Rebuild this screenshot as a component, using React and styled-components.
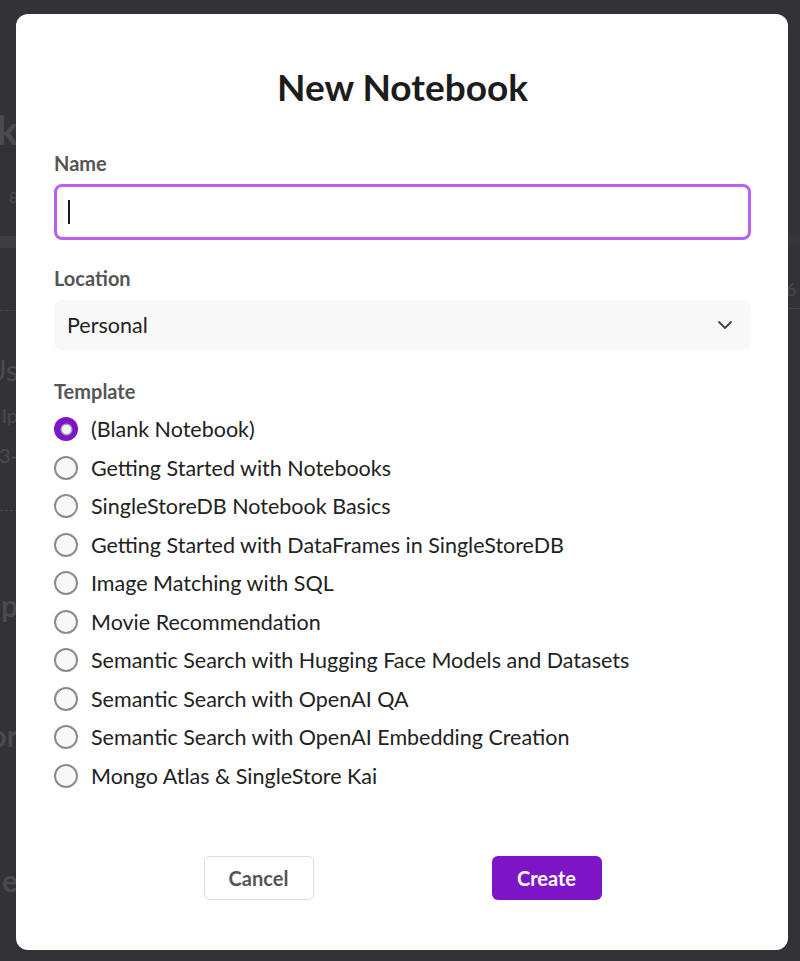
import styled, { createGlobalStyle } from "styled-components";
import { ChevronDown } from "lucide-react";

const GlobalStyle = createGlobalStyle`
  html, body {
    margin: 0;
    padding: 0;
    background: #323237;
    font-family: Lato, "Open Sans", sans-serif;
  }
  * { box-sizing: border-box; }
`;

const Page = styled.div`
  height: 961px;
  overflow: hidden;
  display: flex;
  justify-content: space-between;
`;

const GhostColumn = styled.div`
  width: ${(p) => p.$width}px;
  display: flex;
  flex-direction: column;
  align-items: ${(p) => (p.$side === "left" ? "flex-end" : "flex-start")};
  padding-top: ${(p) => p.$top}px;
`;

const Ghost = styled.div`
  white-space: nowrap;
  color: #4a4a50;
  font-size: ${(p) => p.$size}px;
  font-weight: ${(p) => (p.$bold ? 700 : 400)};
  line-height: ${(p) => p.$size + 4}px;
  margin-top: ${(p) => p.$gap}px;
`;

const GhostRule = styled.div`
  align-self: stretch;
  height: ${(p) => p.$h}px;
  margin-top: ${(p) => p.$gap}px;
  background: ${(p) => p.$bg || "transparent"};
  border-bottom: ${(p) => p.$line || "none"};
`;

const Overlay = styled.div`
  position: fixed;
  inset: 0;
  display: flex;
  justify-content: center;
  align-items: flex-start;
  padding: 14px 0 0 4px;
`;

const Modal = styled.div`
  width: 772px;
  height: 936px;
  background: #ffffff;
  border-radius: 12px;
  padding: 51px 37px 0 38px;
  display: flex;
  flex-direction: column;
`;

const Title = styled.h1`
  margin: 0;
  text-align: center;
  font-size: 37px;
  line-height: 44px;
  font-weight: 700;
  color: #1c1c1c;
`;

const Field = styled.div`
  display: flex;
  flex-direction: column;
  gap: ${(p) => p.$gap}px;
  margin-top: ${(p) => p.$top}px;
`;

const Label = styled.div`
  font-size: 20px;
  line-height: 24px;
  font-weight: 700;
  color: #555555;
`;

const TextBox = styled.div`
  height: 56px;
  border: 3px solid #bb5ff3;
  border-radius: 8px;
  display: flex;
  align-items: center;
  padding-left: 11px;
`;

const Caret = styled.span`
  width: 2px;
  height: 24px;
  background: #1a1a1a;
`;

const Select = styled.div`
  height: 50px;
  border-radius: 8px;
  background: #f8f8f8;
  display: flex;
  align-items: center;
  justify-content: space-between;
  padding: 0 14px 0 13px;
  font-size: 21.5px;
  color: #222222;
`;

const RadioList = styled.div`
  display: flex;
  flex-direction: column;
`;

const RadioRow = styled.label`
  height: 38.5px;
  display: flex;
  align-items: center;
  gap: 13px;
  font-size: 21.5px;
  color: #222222;
`;

const RadioDot = styled.span`
  width: 24px;
  height: 24px;
  border-radius: 50%;
  flex-shrink: 0;
  display: flex;
  align-items: center;
  justify-content: center;
  background: ${(p) => (p.$checked ? "#7d15c7" : "#f8f8f8")};
  border: ${(p) => (p.$checked ? "none" : "2px solid #8c8c8c")};

  &::after {
    content: "";
    display: ${(p) => (p.$checked ? "block" : "none")};
    width: 9px;
    height: 9px;
    border-radius: 50%;
    background: #f4f4f4;
    box-shadow: 0 0 0 1.5px #a8a8a8;
  }
`;

const Footer = styled.div`
  margin-top: 61px;
  display: flex;
  justify-content: center;
  gap: 178px;
`;

const Button = styled.button`
  width: 110px;
  height: 44px;
  border-radius: 6px;
  font-family: inherit;
  font-size: 20px;
  font-weight: 700;
  cursor: pointer;
  background: ${(p) => (p.$primary ? "#7d15c7" : "#ffffff")};
  color: ${(p) => (p.$primary ? "#ffffff" : "#555555")};
  border: ${(p) => (p.$primary ? "none" : "1.5px solid #dddddd")};
`;

const templates = [
  "(Blank Notebook)",
  "Getting Started with Notebooks",
  "SingleStoreDB Notebook Basics",
  "Getting Started with DataFrames in SingleStoreDB",
  "Image Matching with SQL",
  "Movie Recommendation",
  "Semantic Search with Hugging Face Models and Datasets",
  "Semantic Search with OpenAI QA",
  "Semantic Search with OpenAI Embedding Creation",
  "Mongo Atlas & SingleStore Kai",
];

export default function App() {
  return (
    <>
      <GlobalStyle />
      <Page>
        <GhostColumn $side="left" $width={18} $top={108}>
          <Ghost $size={40} $bold $gap={0}>k</Ghost>
          <Ghost $size={16} $gap={35}>8</Ghost>
          <GhostRule $h={12} $gap={29} $bg="#3e3e43" />
          <GhostRule $h={1} $gap={62} $line="1px dotted #48484d" />
          <Ghost $size={28} $gap={43}>Us</Ghost>
          <Ghost $size={20} $gap={17}>lp</Ghost>
          <Ghost $size={20} $gap={16}>3-</Ghost>
          <GhostRule $h={1} $gap={43} $line="1px dashed #48484d" />
          <Ghost $size={30} $bold $gap={77}>p</Ghost>
          <Ghost $size={30} $bold $gap={96}>or</Ghost>
          <Ghost $size={30} $bold $gap={111}>e</Ghost>
        </GhostColumn>
        <GhostColumn $side="right" $width={14} $top={236}>
          <GhostRule $h={8} $gap={0} $bg="#36363b" />
          <Ghost $size={18} $gap={34}>6</Ghost>
          <GhostRule $h={1} $gap={8} $line="1px solid #404045" />
        </GhostColumn>
      </Page>
      <Overlay>
        <Modal>
          <Title>New Notebook</Title>
          <Field $top={42} $gap={9}>
            <Label>Name</Label>
            <TextBox>
              <Caret />
            </TextBox>
          </Field>
          <Field $top={26} $gap={10}>
            <Label>Location</Label>
            <Select>
              Personal
              <ChevronDown size={24} strokeWidth={1.8} color="#444" />
            </Select>
          </Field>
          <Field $top={29} $gap={7}>
            <Label>Template</Label>
            <RadioList>
              {templates.map((t, i) => (
                <RadioRow key={t}>
                  <RadioDot $checked={i === 0} />
                  {t}
                </RadioRow>
              ))}
            </RadioList>
          </Field>
          <Footer>
            <Button>Cancel</Button>
            <Button $primary>Create</Button>
          </Footer>
        </Modal>
      </Overlay>
    </>
  );
}
